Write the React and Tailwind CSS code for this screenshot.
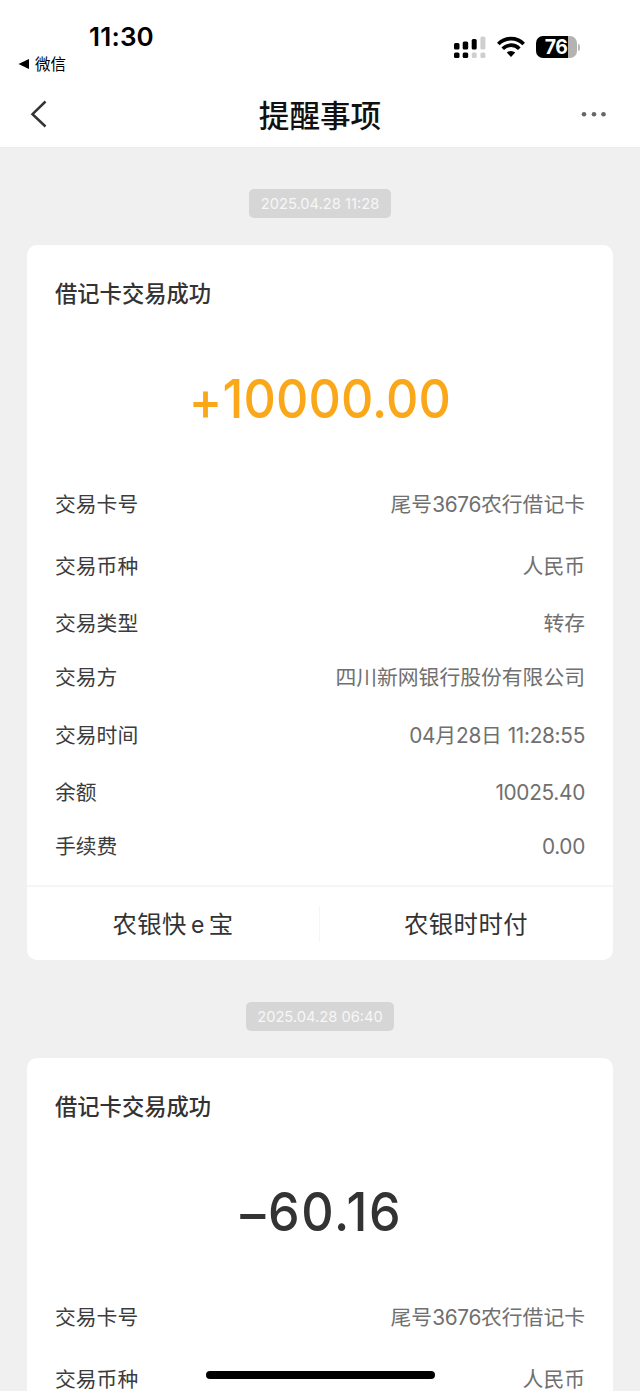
const cardRows = [
  { label: '交易卡号', value: '尾号3676农行借记卡', height: 'h-[62px]' },
  { label: '交易币种', value: '人民币', height: 'h-[61px]' },
  { label: '交易类型', value: '转存', height: 'h-[54px]' },
  { label: '交易方', value: '四川新网银行股份有限公司', height: 'h-[54px]' },
  { label: '交易时间', value: '04月28日 11:28:55', height: 'h-[61px]' },
  { label: '余额', value: '10025.40', height: 'h-[54px]' },
  { label: '手续费', value: '0.00', height: 'h-[54px]' },
];

function StatusBar() {
  return (
    <div className="flex h-[80px] shrink-0 justify-between">
      <div className="flex flex-col">
        <div className="mt-[21px] ml-[89px] h-[31px] text-[26px] leading-[32px] font-semibold tracking-[0.2px] text-black">
          11:30
        </div>
        <div className="ml-[18px] flex h-[24px] items-center gap-[6px] text-[15.5px] leading-none text-black">
          <svg width="11" height="11" viewBox="0 0 11 11">
            <path d="M11 0v10L0.500 5z" fill="#000" />
          </svg>
          <span className="pt-px">微信</span>
        </div>
      </div>
      <div className="mt-[34px] mr-[60px] flex h-[26px] items-center">
        <svg width="33" height="24" viewBox="0 0 33 24">
          <g fill="#000">
            <rect x="0" y="8" width="5.500" height="6.500" rx="1.5" />
            <rect x="8.700" y="6.500" width="5.500" height="8" rx="1.5" />
            <rect x="17.700" y="4" width="5" height="10.500" rx="1.5" />
            <rect x="0" y="17.500" width="5.500" height="5.500" rx="1.5" />
            <rect x="8.700" y="17.500" width="5.500" height="5.500" rx="1.5" />
          </g>
          <g fill="#cfcfcf">
            <rect x="26.400" y="1.500" width="5" height="13" rx="1.5" />
            <rect x="17.700" y="17.500" width="5" height="5.500" rx="1.5" />
            <rect x="26.400" y="17.500" width="5" height="5.500" rx="1.5" />
          </g>
        </svg>
        <svg className="ml-[10px]" width="28" height="22" viewBox="0 0 28 22">
          <g fill="none" stroke="#000" strokeWidth="3.600">
            <path d="M1.300 8A17.600 17.600 0 0 1 26.700 8" />
            <path d="M5.700 12.700A11.500 11.500 0 0 1 22.300 12.700" />
          </g>
          <path d="M9.800 16.600A6.300 6.300 0 0 1 18.200 16.600L14 21z" fill="#000" />
        </svg>
        <div className="ml-[11px] flex items-center gap-[1px]">
          <div className="flex h-[22px] w-[41px] items-center justify-center rounded-[7px] bg-linear-to-r from-black from-78% to-[#b3b3b3] to-78% pt-px text-[19.500px] leading-none font-bold tracking-[-0.500px] text-white">
            76
          </div>
          <div className="h-[7px] w-[2.500px] rounded-r-full bg-[#bbbbbb]" />
        </div>
      </div>
    </div>
  );
}

function NavBar() {
  return (
    <div className="flex h-[68px] shrink-0 items-center justify-between border-b border-[#ececec] pr-[33px] pl-[30px]">
      <svg width="18" height="28" viewBox="0 0 18 28">
        <path d="M15.500 1.500L2.500 14.200L15.500 26.500" fill="none" stroke="#333" strokeWidth="2.500" />
      </svg>
      <h1 className="mt-[5px] ml-[11px] text-[30.600px] leading-none font-medium text-[#111]">提醒事项</h1>
      <svg width="26" height="6" viewBox="0 0 26 6">
        <g fill="#666">
          <circle cx="3" cy="3.300" r="2.300" />
          <circle cx="13" cy="3.300" r="2.300" />
          <circle cx="22.500" cy="3.300" r="2.300" />
        </g>
      </svg>
    </div>
  );
}

function TimeStamp({ children, width }) {
  return (
    <div className={`mx-auto flex h-[29px] shrink-0 items-center justify-center rounded-[5px] bg-[#d6d6d6] pt-px text-[14.700px] text-[#f7f7f7] ${width}`}>
      {children}
    </div>
  );
}

function Value({ text }) {
  return text.split(/([0-9.:]+)/).map((part, i) =>
    i % 2 ? <span key={i} className="tracking-[-0.300px]">{part}</span> : part,
  );
}

function Card({ sign, amount, amountStyle, rows, children }) {
  return (
    <section className="mx-[27px] flex shrink-0 flex-col rounded-[10px] bg-white">
      <h2 className="mt-[33px] ml-[28px] h-[31px] text-[22.300px] leading-[32px] font-medium text-[#333]">借记卡交易成功</h2>
      <div className={`mt-[55px] flex h-[68px] scale-x-93 items-center justify-center pt-px text-[54px] leading-none font-medium [font-feature-settings:'calt'_0] ${amountStyle}`}>
        <span className="pt-[5px]">{sign}</span>
        <span>{amount}</span>
      </div>
      <dl className="mt-[41px] flex flex-col px-[28px] text-[20.800px] leading-none">
        {rows.map((row) => (
          <div key={row.label} className={`flex items-center justify-between pt-[3px] ${row.height}`}>
            <dt className="text-[#3c3c3c]">{row.label}</dt>
            <dd className="whitespace-pre text-[#707070]"><Value text={row.value} /></dd>
          </div>
        ))}
      </dl>
      {children}
    </section>
  );
}

export default function App() {
  return (
    <div
      lang="zh-CN"
      className="relative flex h-[1391px] w-[640px] flex-col overflow-hidden bg-white font-[Inter,'Noto_Sans_CJK_SC',sans-serif]"
    >
      <StatusBar />
      <NavBar />
      <main className="flex min-h-0 flex-1 flex-col overflow-hidden bg-[#f0f0f0] pt-[41px]">
        <TimeStamp width="w-[142px]">2025.04.28 11:28</TimeStamp>
        <div className="h-[27px] shrink-0" />
        <Card sign="+" amount="10000.00" amountStyle="tracking-[0.100px] text-[#faa819]" rows={cardRows}>
          <div className="mt-[12px] flex h-[75px] items-center border-t-2 border-[#f5f5f5] text-[24.400px] tracking-[0.400px] text-[#333]">
            <div className="flex-1 pt-px text-center">农银快<span className="mx-[4px] text-[23px]">e</span>宝</div>
            <div className="h-[36px] w-px bg-[#f5f5f5]" />
            <div className="flex-1 pt-px pr-px text-center">农银时时付</div>
          </div>
        </Card>
        <div className="h-[42px] shrink-0" />
        <TimeStamp width="w-[148px]">2025.04.28 06:40</TimeStamp>
        <div className="h-[27px] shrink-0" />
        <Card sign="–" amount="60.16" amountStyle="gap-[1px] pl-[3px] tracking-[1.800px] text-[#333]" rows={cardRows.slice(0, 2)} />
      </main>
      <div className="absolute bottom-[12px] left-[206px] h-[8px] w-[229px] rounded-full bg-black" />
    </div>
  );
}
